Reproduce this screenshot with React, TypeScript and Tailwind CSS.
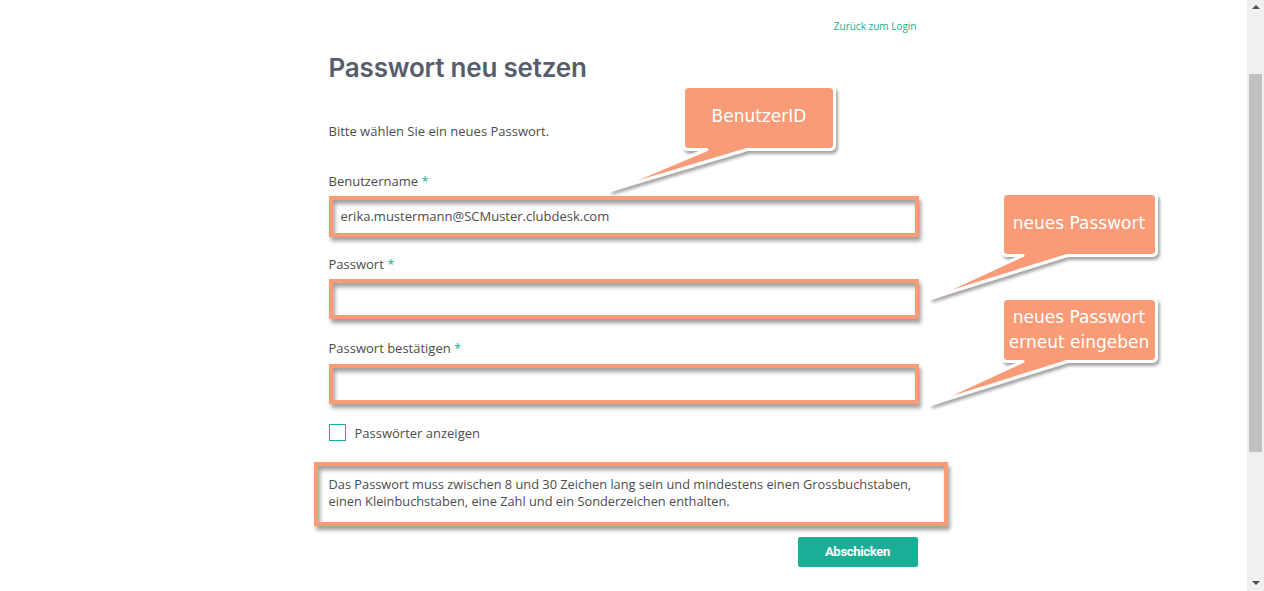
import React from 'react'

const ORANGE = '#f99b76'

function Label({ text }: { text: string }) {
  return (
    <div className="text-[13px] leading-[18px] text-[#4d4d4d]">
      {text} <span className="text-[#1aae96]">*</span>
    </div>
  )
}

function Frame({ h, value, className = '' }: { h: string; value?: string; className?: string }) {
  return (
    <div
      className={`${h} ${className} flex items-center border-4 border-[#f99b76] bg-white pl-2 text-[13px] text-[#4d4d4d] shadow-[2px_4px_4px_rgba(0,0,0,0.38),inset_2px_4px_4px_rgba(0,0,0,0.38)]`}
    >
      {value}
    </div>
  )
}

function Callouts() {
  const box = (l: number, t: number, r: number, b: number, b1: number, b2: number, tx: number, ty: number) =>
    `M ${l + 5},${t} H ${r - 5} Q ${r},${t} ${r},${t + 5} V ${b - 5} Q ${r},${b} ${r - 5},${b} H ${b2} L ${tx},${ty} L ${b1},${b} H ${l + 5} Q ${l},${b} ${l},${b - 5} V ${t + 5} Q ${l},${t} ${l + 5},${t} Z`
  return (
    <>
      <svg className="pointer-events-none absolute left-0 top-0" width="1264" height="591">
        <defs>
          <filter id="sh" x="-20%" y="-20%" width="140%" height="150%">
            <feDropShadow dx="2" dy="3" stdDeviation="1.6" floodColor="#000" floodOpacity="0.35" />
          </filter>
        </defs>
        <g fill={ORANGE} stroke="#fff" strokeWidth="3" strokeLinejoin="round" filter="url(#sh)">
          <path d={box(683.5, 86.5, 834.5, 149.5, 707, 747, 611, 190)} />
          <path d={box(1002.5, 193.5, 1156.5, 255.5, 1023, 1067, 931, 298)} />
          <path d={box(1002.5, 298.5, 1156.5, 361.5, 1023, 1067, 931, 404)} />
        </g>
      </svg>
      <div className="absolute left-[684px] top-[104px] w-[150px] text-center text-[17px] leading-[24px] text-white font-['DejaVu_Sans',sans-serif]">
        BenutzerID
      </div>
      <div className="absolute left-[1003px] top-[211px] w-[152px] text-center text-[17px] leading-[24px] text-white font-['DejaVu_Sans',sans-serif]">
        neues Passwort
      </div>
      <div className="absolute left-[1003px] top-[305px] w-[152px] text-center text-[17px] leading-[25px] text-white font-['DejaVu_Sans',sans-serif]">
        neues Passwort
        <br />
        erneut eingeben
      </div>
    </>
  )
}

function Scrollbar() {
  return (
    <div className="flex w-[17px] flex-col items-center bg-[#f0f0f0]">
      <div className="mt-[5px] h-0 w-0 border-x-[4px] border-b-[4px] border-x-transparent border-b-[#505050]" />
      <div className="mt-[65px] h-[378px] w-[13px] bg-[#c1c1c1]" />
      <div className="mt-auto mb-[6px] h-0 w-0 border-x-[4px] border-t-[4px] border-x-transparent border-t-[#505050]" />
    </div>
  )
}

export default function App() {
  return (
    <div className="relative flex h-[591px] w-[1264px] overflow-hidden bg-white font-['Open_Sans',sans-serif]">
      <main className="flex-1">
        <div className="mx-auto flex w-[590px] flex-col">
          <div className="pt-[20px] pr-[2px] text-right text-[10px] leading-[12px] text-[#1aae96]">Zurück zum Login</div>
          <h1 className="mt-[20px] text-[26px] font-semibold leading-[32px] text-[#575d6b] font-['Inter',sans-serif] tracking-[-0.2px]">
            Passwort neu setzen
          </h1>
          <p className="mt-[38px] text-[13px] leading-[18px] text-[#4d4d4d]">Bitte wählen Sie ein neues Passwort.</p>

          <div className="mt-[32px]">
            <Label text="Benutzername" />
          </div>
          <Frame h="h-[41px]" className="mt-[6px]" value="erika.mustermann@SCMuster.clubdesk.com" />

          <div className="mt-[18px]">
            <Label text="Passwort" />
          </div>
          <Frame h="h-[40px]" className="mt-[6px]" />

          <div className="mt-[20px]">
            <Label text="Passwort bestätigen" />
          </div>
          <Frame h="h-[40px]" className="mt-[7px]" />

          <div className="mt-[20px] flex h-[17px] items-center gap-[9px]">
            <div className="h-[17px] w-[17px] border border-[#1aae96] bg-white" />
            <span className="text-[13px] leading-[18px] text-[#4d4d4d]">Passwörter anzeigen</span>
          </div>

          <div className="-ml-[15px] mt-[21px] h-[64px] w-[634px] border-4 border-[#f99b76] bg-white pl-[11px] pt-[10px] text-[12.8px] leading-[17px] text-[#4d4d4d] shadow-[2px_4px_4px_rgba(0,0,0,0.38),inset_2px_4px_4px_rgba(0,0,0,0.38)]">
            Das Passwort muss zwischen 8 und 30 Zeichen lang sein und mindestens einen Grossbuchstaben,
            <br />
            einen Kleinbuchstaben, eine Zahl und ein Sonderzeichen enthalten.
          </div>

          <button className="mt-[11px] mr-[1px] flex h-[30px] w-[120px] items-center justify-center self-end rounded-[2px] bg-[#1aae96] text-[13px] font-bold tracking-[-0.3px] text-white font-['Roboto',sans-serif]">
            Abschicken
          </button>
        </div>
      </main>
      <Scrollbar />
      <Callouts />
    </div>
  )
}
